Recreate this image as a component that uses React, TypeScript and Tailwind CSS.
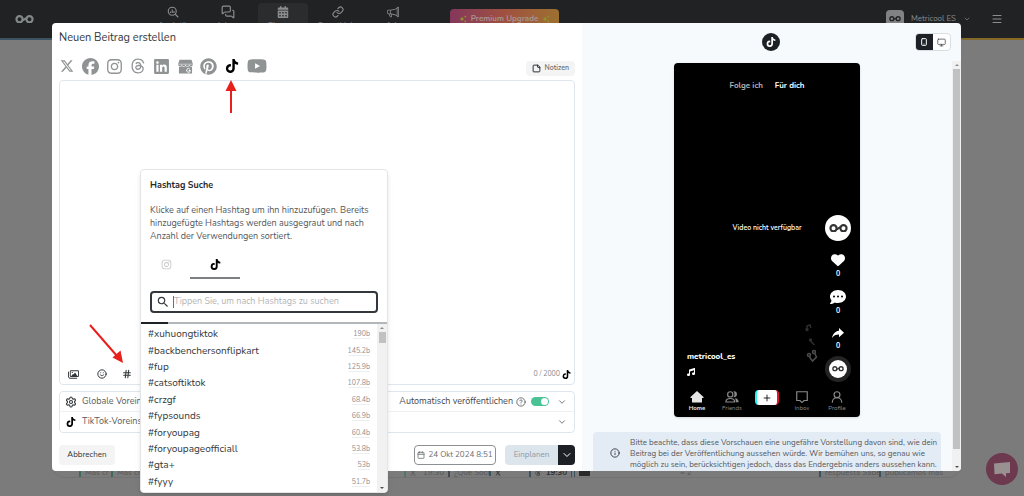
import type { ReactNode } from "react";
import {
  FaXTwitter,
  FaFacebook,
  FaInstagram,
  FaThreads,
  FaLinkedin,
  FaPinterest,
  FaTiktok,
  FaYoutube,
  FaCalendarDays,
  FaHeart,
  FaCommentDots,
  FaMusic,
  FaRegImages,
} from "react-icons/fa6";
import { BsMegaphone } from "react-icons/bs";
import { IoMdShareAlt } from "react-icons/io";
import { MdSearch } from "react-icons/md";
import {
  Calendar,
  ChevronDown,
  CircleHelp,
  Hash,
  Info,
  Link,
  Menu,
  MessagesSquare,
  Monitor,
  Plus,
  Settings,
  Smartphone,
  Smile,
  StickyNote,
  UserRound,
} from "lucide-react";

function Logo({ className }: { className: string }) {
  return (
    <svg viewBox="0 0 40 18" fill="none" stroke="currentColor" strokeWidth="4.5" className={className}>
      <circle cx="9.5" cy="9" r="6.5" />
      <circle cx="30.5" cy="9" r="6.5" />
      <path d="M15.500 11c3 .8 6-4.800 9-4" strokeWidth="4" />
    </svg>
  );
}

function AnalyticsIcon() {
  return (
    <svg viewBox="0 0 24 24" fill="none" stroke="currentColor" strokeWidth="2.200" className="size-3">
      <circle cx="10.500" cy="10.500" r="8" />
      <path d="m16.500 16.500 6 6M7 14v-3M10.500 14V7M14 14v-4" />
    </svg>
  );
}

function BusinessIcon() {
  return (
    <svg viewBox="0 0 24 24" className="h-[15px] w-[15px]">
      <path
        fill="currentColor"
        d="M2.500 1h19L24 8.500c0 2-1.300 3.200-3 3.200s-3-1.200-3-3.200c0 2-1.300 3.200-3 3.200s-3-1.200-3-3.200c0 2-1.300 3.200-3 3.200s-3-1.200-3-3.200c0 2-1.300 3.200-3 3.200S0 10.500 0 8.500z"
      />
      <path
        fill="currentColor"
        d="M1.500 12.200c1.800.3 3.300-.2 4.500-1.200 1.800 1.600 4.200 1.600 6 0 1.800 1.600 4.200 1.600 6 0 1.200 1 2.700 1.500 4.500 1.200V23h-21z"
      />
      <path fill="none" stroke="#fff" strokeWidth="1.500" d="M19 16.200a3 3 0 1 0 .8 2.200H17" />
      <path stroke="#fff" strokeWidth="0.800" d="M0 8.300h24" />
    </svg>
  );
}

function FriendsIcon() {
  return (
    <svg viewBox="0 0 24 24" fill="none" stroke="currentColor" strokeWidth="2" className="size-[14px]">
      <circle cx="9" cy="7.500" r="4.500" />
      <path d="M1.500 20.500c0-4 3-6 7.500-6s7.500 2 7.500 6z" />
      <path
        fill="currentColor"
        stroke="none"
        d="M14.500 2.300c3.500-.6 6 1.800 6 5s-2.500 5.600-6 5c2.500-3 2.500-7 0-10zM17 14.200c4 .3 6.500 2.800 6.500 7H18.500c0-3-.3-5-1.500-7z"
      />
    </svg>
  );
}

function InboxIcon() {
  return (
    <svg viewBox="0 0 24 24" fill="none" stroke="currentColor" strokeWidth="2" className="size-[14px]">
      <path d="M3 3h18v15h-5.500L12 21.500 8.500 18H3z" />
    </svg>
  );
}

function Sparkles() {
  return (
    <svg viewBox="0 0 16 16" fill="#8f9a2a" className="size-2">
      <path d="m6 3 1.500 3.500L11 8 7.500 9.500 6 13 4.500 9.500 1 8l3.500-1.500zM12.500 1l.8 1.700 1.700.8-1.700.8-.8 1.700-.8-1.700-1.700-.8 1.700-.8zM12.500 10l.8 1.700 1.700.8-1.700.8-.8 1.700-.8-1.700-1.700-.8 1.700-.8z" />
    </svg>
  );
}

const navItems: { label: string; icon: ReactNode; active?: boolean }[] = [
  { label: "Analytik", icon: <AnalyticsIcon /> },
  { label: "Inbox", icon: <MessagesSquare className="size-[14px]" strokeWidth={2} /> },
  { label: "Planung", icon: <FaCalendarDays className="size-3" />, active: true },
  { label: "SmartLinks", icon: <Link className="size-3" strokeWidth={2.2} /> },
  { label: "Ads", icon: <BsMegaphone className="size-3" /> },
];

function Header() {
  return (
    <header className="bg-gradient-to-r from-[#3d5361] via-[#3d5361] via-50% to-[#8a6a20] pb-0.5">
      <div className="flex h-[38px] items-center bg-[#202224] pr-[21px] text-[#8b8d8f]">
        <a href="#start" aria-label="Start" className="ml-[15px] text-[#85888a]">
          <Logo className="w-[19px]" />
        </a>
        <nav className="ml-[114px] flex gap-[5px] self-start pt-[3px]">
          {navItems.map((item) => (
            <a
              key={item.label}
              href={"#" + item.label.toLowerCase()}
              className={
                "flex h-8 w-[50px] flex-col items-center gap-[3px] rounded pt-[3px] text-[8px] leading-[10px] " +
                (item.active ? "bg-[#2a2c2e]" : "")
              }
            >
              <span className="flex h-3 items-center">{item.icon}</span>
              {item.label}
            </a>
          ))}
        </nav>
        <button className="ml-[32px] flex h-5 w-[109px] items-center justify-center gap-1 rounded bg-gradient-to-r from-[#84375a] via-[#a0503f] to-[#9c7030] text-[8px] font-bold text-[#a5938f]">
          <Sparkles />
          Premium Upgrade
          <Sparkles />
        </button>
        <div className="ml-auto flex items-center">
          <button className="flex items-center gap-[7px] text-[8px]">
            <span className="flex size-[18px] items-center justify-center rounded bg-[#808284] text-[#202224]">
              <Logo className="w-3" />
            </span>
            Metricool ES
            <ChevronDown className="size-2" />
          </button>
          <button aria-label="Menü" className="ml-5">
            <Menu className="size-3" />
          </button>
        </div>
      </div>
    </header>
  );
}

function Behind() {
  return (
    <main className="flex flex-1 flex-col pb-[18px] pl-[52px] pr-[63px]">
      <div className="flex flex-1 flex-col justify-end overflow-hidden rounded-xl border border-[#727272] bg-[#7b7b7b]">
        <div className="flex h-2 items-center overflow-hidden pl-[26px] pr-4 text-[8px] leading-2 text-[#55585a]">
          <span className="w-[30px] overflow-hidden whitespace-nowrap border-l-2 border-[#3f6a5a] pl-1">Más creat</span>
          <span className="ml-0.5 w-[293px] border-l-2 border-[#3f6a5a] pl-1">Más creat</span>
          <span className="flex w-10 items-center justify-between border-l-2 border-[#4f7668] pl-1">
            <FaXTwitter className="size-[6px]" /> 19:30
          </span>
          <span className="ml-1 w-[41px] overflow-hidden whitespace-nowrap border-l-2 border-[#44484a] pl-1">
            ¿Qué Social
          </span>
          <span className="flex w-10 border-l-2 border-[#38525f] pl-1 text-[#2e3032]">
            <FaXTwitter className="size-[6px]" />
          </span>
          <span className="flex w-[38px] items-center justify-between border-l-2 border-[#38525f] pl-1 font-bold text-[#2e3032]">
            <FaThreads className="size-[6px]" /> 19:30
          </span>
          <span className="ml-1 h-2 w-1 border-x border-[#38525f]" />
          <span className="ml-1 h-[6px] w-[11px] bg-[#2a2a2a]" />
          <span className="ml-[90px]">≡ 2</span>
          <span className="ml-auto w-[60px] overflow-hidden whitespace-nowrap border-l-2 border-[#38525f] pl-1">
            respuesta Sabem
          </span>
          <span className="w-[65px] overflow-hidden whitespace-nowrap border-l-2 border-[#38525f] pl-1">
            publicamos más en
          </span>
        </div>
      </div>
    </main>
  );
}

const networks = [
  { name: "X", icon: <FaXTwitter className="size-[14px]" /> },
  { name: "Facebook", icon: <FaFacebook className="size-[17px]" /> },
  { name: "Instagram", icon: <FaInstagram className="size-[17px]" /> },
  { name: "Threads", icon: <FaThreads className="size-4" /> },
  { name: "LinkedIn", icon: <FaLinkedin className="size-[17px]" /> },
  { name: "Google Business", icon: <BusinessIcon /> },
  { name: "Pinterest", icon: <FaPinterest className="size-[17px]" /> },
  { name: "TikTok", icon: <FaTiktok className="size-[14px] text-black" /> },
  { name: "YouTube", icon: <FaYoutube className="size-5" /> },
];

const hashtags = [
  ["#xuhuongtiktok", "190b"],
  ["#backbenchersonflipkart", "145.2b"],
  ["#fup", "125.9b"],
  ["#catsoftiktok", "107.8b"],
  ["#crzgf", "68.4b"],
  ["#fypsounds", "66.9b"],
  ["#foryoupag", "60.4b"],
  ["#foryoupageofficiall", "53.8b"],
  ["#gta+", "53b"],
  ["#fyyy", "51.7b"],
];

function HashtagPopover() {
  return (
    <section className="absolute left-[88px] top-[146px] z-10 w-[248px] overflow-hidden rounded border border-[#e3e6e9] bg-white shadow-md">
      <div className="px-[9px] pt-[9px]">
        <h2 className="text-[9px] font-bold leading-[13px] text-[#26292c]">Hashtag Suche</h2>
        <p className="mt-3 text-[9px] leading-[13px] text-[#54575a]">
          Klicke auf einen Hashtag um ihn hinzuzufügen. Bereits hinzugefügte Hashtags werden ausgegraut und nach Anzahl
          der Verwendungen sortiert.
        </p>
        <div className="mt-2 flex">
          <button aria-label="Instagram" className="flex h-[26px] w-8 items-center justify-center text-[#c4c6c8]">
            <FaInstagram className="size-[11px]" />
          </button>
          <button
            aria-label="TikTok"
            className="ml-2 flex h-7 w-[50px] items-center justify-center border-b-2 border-[#7d8083] text-black"
          >
            <FaTiktok className="size-[11px]" />
          </button>
        </div>
        <label className="mt-3 flex h-[22px] items-center gap-[3px] rounded border-2 border-[#33373b] pl-1 pr-[6px] text-[#33373b]">
          <MdSearch className="size-[14px] shrink-0" />
          <span className="h-3 w-px bg-[#6b6e71]" />
          <input
            type="text"
            aria-label="Hashtags suchen"
            placeholder="Tippen Sie, um nach Hashtags zu suchen"
            className="-ml-[3px] min-w-0 flex-1 text-[9px] outline-none placeholder:text-[#b3b5b7]"
          />
        </label>
      </div>
      <div className="mt-[9px] flex h-[2px] bg-[#b4b7b9]">
        <span className="w-[27px] bg-[#1d2125]" />
      </div>
      <div className="flex">
        <ul className="grid h-[168px] flex-1 grid-rows-10 pb-0.5 pl-[7px] pr-[7px] pt-0.5">
          {hashtags.map(([tag, count]) => (
            <li key={tag} className="flex items-center justify-between">
              <button className="text-[10px] leading-[14px] text-[#33373a]">{tag}</button>
              <span className="border-b border-[#eceeef] text-[7px] leading-[9px] text-[#8d9093]">{count}</span>
            </li>
          ))}
        </ul>
        <div className="flex w-[10px] flex-col items-center bg-[#f1f1f1] py-[3px]">
          <span className="border-x-2 border-b-2 border-x-transparent border-b-[#8b8b8b]" />
          <span className="mt-[3px] h-[11px] w-[7px] bg-[#c1c1c1]" />
          <span className="mt-auto border-x-2 border-t-2 border-x-transparent border-t-[#505050]" />
        </div>
      </div>
    </section>
  );
}

function Composer() {
  return (
    <section className="flex flex-col bg-white px-[7px] pb-[6px]">
      <h1 className="text-[11px] leading-[30px] text-[#33373a]">Neuen Beitrag erstellen</h1>
      <div className="flex h-[27px] items-center justify-between">
        <div className="flex items-center gap-[7px] pb-px text-[#8f9394]">
          {networks.map((n) => (
            <button key={n.name} aria-label={n.name} className="flex min-w-4 justify-center">
              {n.icon}
            </button>
          ))}
        </div>
        <button className="mt-1 flex h-[15px] items-center gap-1 rounded bg-[#f4f4f4] px-[6px] text-[7px] font-semibold text-[#6b6e71]">
          <StickyNote className="size-[9px] text-[#26292c]" strokeWidth={2.6} />
          Notizen
        </button>
      </div>

      <div className="flex flex-col rounded border border-[#dfe6ee]">
        <textarea aria-label="Beitragstext" className="h-[283px] resize-none p-2 text-[10px] outline-none" />
        <div className="flex h-5 items-center pl-[8px] pr-[3px] text-[#33373a]">
          <button aria-label="Medien">
            <FaRegImages className="size-[11px]" />
          </button>
          <button aria-label="Emoji" className="ml-[18px]">
            <Smile className="size-[10px]" strokeWidth={2.4} />
          </button>
          <button aria-label="Hashtag" className="ml-[15px]">
            <Hash className="size-[10px]" strokeWidth={2.6} />
          </button>
          <span className="ml-auto mr-0.5 text-[7px] text-[#85888b]">0 / 2000</span>
          <FaTiktok className="size-[9px] text-black" />
        </div>
      </div>

      <div className="mt-[6px] rounded border border-[#dfe6ee] text-[9px] text-[#5a5d60]">
        <div className="flex h-5 items-center border-b border-[#eef1f4] px-[5px]">
          <Settings className="mr-[5px] size-3 text-[#33373a]" strokeWidth={2.2} />
          Globale Voreinstellungen
          <label htmlFor="auto" className="ml-auto text-[#45484b]">
            Automatisch veröffentlichen
          </label>
          <CircleHelp className="ml-[3px] size-[10px]" />
          <span className="relative ml-[5px] h-[9px] w-[18px]">
            <input
              id="auto"
              type="checkbox"
              defaultChecked
              className="peer block h-[9px] w-[18px] appearance-none rounded-full bg-gray-300 checked:bg-[#49c294]"
            />
            <span className="pointer-events-none absolute right-px top-px size-[7px] rounded-full bg-white" />
          </span>
          <button aria-label="Globale Voreinstellungen öffnen" className="ml-2 mr-0.5">
            <ChevronDown className="size-[10px]" />
          </button>
        </div>
        <div className="flex h-5 items-center px-[5px]">
          <FaTiktok className="ml-px mr-[6px] size-[10px] text-black" />
          TikTok-Voreinstellungen
          <button aria-label="TikTok-Voreinstellungen öffnen" className="ml-auto mr-0.5">
            <ChevronDown className="size-[10px]" />
          </button>
        </div>
      </div>

      <div className="mt-3 flex h-5 items-stretch">
        <button className="w-14 rounded bg-[#f4f4f4] text-[8px] text-[#33373a]">Abbrechen</button>
        <button className="ml-auto flex w-[82px] items-center justify-center gap-[3px] whitespace-nowrap rounded border border-[#8d9093] text-[8px] text-[#6b6e71]">
          <Calendar className="size-2" strokeWidth={2.4} />
          24 Okt 2024 8:51
        </button>
        <button className="ml-[9px] w-[53px] rounded-l bg-[#dde5ec] text-[8px] text-[#8c98a3]">Einplanen</button>
        <button
          aria-label="Optionen"
          className="flex w-[17px] items-center justify-center rounded-r bg-[#1d2125] text-white"
        >
          <ChevronDown className="size-3" />
        </button>
      </div>
    </section>
  );
}

function PhoneAction({ icon, className }: { icon: ReactNode; className: string }) {
  return (
    <button className={"flex w-[26px] flex-col items-center text-[7px] font-bold leading-[9px] " + className}>
      {icon}
      <span>0</span>
    </button>
  );
}

function Phone() {
  const tab = "flex w-[35px] flex-col items-center text-[6px] leading-2";
  return (
    <div className="mx-auto mt-[2px] flex h-[354px] w-[186px] flex-col rounded bg-black text-white shadow">
      <div className="flex justify-center gap-3 pt-[16px] text-[8px] font-bold leading-[13px]">
        <span className="text-[#b5b5b5]">Folge ich</span>
        <span>Für dich</span>
      </div>
      <div className="relative flex-1">
        <p className="mt-[130px] text-center text-[7px] font-semibold leading-[11px]">Video nicht verfügbar</p>
        <div className="absolute bottom-2 left-[13px] text-[8px] font-extrabold leading-[10px]">
          metricool_es
          <FaMusic className="mt-[6px] size-2" />
        </div>
        <svg
          viewBox="0 0 16 44"
          fill="none"
          stroke="#4d4d4d"
          strokeWidth="1.500"
          className="absolute bottom-[17px] right-[41px] h-11 w-4"
        >
          <g stroke="#2e2e2e">
            <circle cx="4" cy="6.500" r="1" />
            <path d="M4 5V3l3-1 1 3" />
            <path d="m7.500 18 4 4" />
            <circle cx="7.500" cy="17" r="1" />
          </g>
          <circle cx="6" cy="32" r="1.500" />
          <circle cx="11" cy="29" r="1.500" />
          <path d="m6.500 34 3 4 4-4-2-4" />
        </svg>
        <div className="absolute right-[9px] top-[123px] flex flex-col items-center">
          <span className="flex size-[26px] items-center justify-center rounded-full bg-white text-[#333]">
            <Logo className="w-[19px]" />
          </span>
          <PhoneAction className="mt-3" icon={<FaHeart className="mb-0.5 size-[14px]" />} />
          <PhoneAction className="mt-[11px]" icon={<FaCommentDots className="mb-px size-4" />} />
          <PhoneAction className="mt-[10px]" icon={<IoMdShareAlt className="size-4" />} />
          <span className="mt-1.5 flex size-[26px] items-center justify-center rounded-full bg-[#242424]">
            <span className="flex size-[18px] items-center justify-center rounded-full bg-white text-[#333]">
              <Logo className="w-3" />
            </span>
          </span>
        </div>
      </div>
      <div className="flex h-[33px] items-start justify-center pt-[6px] text-[#8a8a8a]">
        <span className={tab + " font-bold text-[#e6e6e6]"}>
          <svg viewBox="0 0 14 14" fill="currentColor" className="size-[14px]">
            <path d="M7 1 0.500 7v1H2v4.500h10V8h1.500V7z" />
          </svg>
          Home
        </span>
        <span className={tab}>
          <FriendsIcon />
          Friends
        </span>
        <span className={tab}>
          <span className="flex h-[15px] w-6 items-center justify-center rounded border-x-2 border-l-[#25f4ee] border-r-[#e5132b] bg-white text-black">
            <Plus className="size-[10px]" />
          </span>
        </span>
        <span className={tab}>
          <InboxIcon />
          Inbox
        </span>
        <span className={tab}>
          <UserRound className="size-[14px]" />
          Profile
        </span>
      </div>
    </div>
  );
}

function Preview() {
  return (
    <section className="flex flex-col bg-[#f6fafd]">
      <div className="grid h-[38px] grid-cols-3 items-center px-[10px]">
        <span />
        <span className="flex size-[18px] items-center justify-center justify-self-center rounded-full bg-[#1d2125] text-white">
          <FaTiktok className="size-[10px]" />
        </span>
        <div className="flex h-[18px] justify-self-end overflow-hidden rounded border border-[#d9dee3] bg-white">
          <button aria-label="Mobil" className="flex w-[17px] items-center justify-center bg-[#1d2125] text-white">
            <Smartphone className="size-2" strokeWidth={3} />
          </button>
          <button aria-label="Desktop" className="flex w-[17px] items-center justify-center text-[#45484b]">
            <Monitor className="size-[9px]" />
          </button>
        </div>
      </div>
      <div className="flex flex-1">
        <div className="flex min-w-0 flex-1 flex-col">
          <Phone />
          <div className="ml-[11px] mr-[11px] mt-[15px] flex flex-1 items-center rounded-t bg-[#e3ecf5] pt-[3px]">
            <Info className="ml-[17px] mr-[10px] size-[10px] shrink-0 text-[#26292c]" />
            <p className="text-[8px] leading-[11px] text-[#54575a]">
              Bitte beachte, dass diese Vorschauen eine ungefähre Vorstellung davon sind, wie dein Beitrag bei der
              Veröffentlichung aussehen würde. Wir bemühen uns, so genau wie möglich zu sein, berücksichtigen jedoch,
              dass das Endergebnis anders aussehen kann.
            </p>
          </div>
        </div>
        <div className="flex w-[9px] flex-col items-center bg-[#f1f1f1] py-[3px]">
          <span className="border-x-2 border-b-2 border-x-transparent border-b-[#8b8b8b]" />
          <span className="mt-[3px] h-[380px] w-[7px] bg-[#c1c1c1]" />
          <span className="mt-auto border-x-2 border-t-2 border-x-transparent border-t-[#505050]" />
        </div>
      </div>
    </section>
  );
}

export default function App() {
  return (
    <div className="relative flex min-h-screen flex-col overflow-hidden bg-[#7b7b7b] font-['Nunito','Lato',sans-serif]">
      <Header />
      <Behind />
      <div role="dialog" aria-label="Neuen Beitrag erstellen" className="absolute left-[52px] right-[63px] top-[23px]">
        <div className="grid grid-cols-[530fr_379fr] overflow-hidden rounded">
          <Composer />
          <Preview />
        </div>
        <HashtagPopover />
        <svg viewBox="0 0 12 34" className="absolute left-[173px] top-[57px] h-[34px] w-3 text-[#e8201c]">
          <path d="M6 8v25" stroke="currentColor" strokeWidth="2" />
          <path d="m6 0 5.500 11H0.500z" fill="currentColor" />
        </svg>
        <svg viewBox="0 0 38 42" className="absolute left-[36px] top-[300px] h-[42px] w-[38px] text-[#e8201c]">
          <path d="m2 2 27 31" stroke="currentColor" strokeWidth="2" />
          <path d="M35 40 24.500 34.500 32.500 27.500z" fill="currentColor" />
        </svg>
      </div>
      <button
        aria-label="Chat"
        className="absolute bottom-[11px] right-[6px] flex size-8 items-center justify-center rounded-full bg-[#6d394f]"
      >
        <svg viewBox="0 0 16 16" fill="#999092" className="size-4">
          <path d="M0 2.500 16 1v11l-4 .3V16l-4-3.400-7.500.6z" />
        </svg>
      </button>
    </div>
  );
}
